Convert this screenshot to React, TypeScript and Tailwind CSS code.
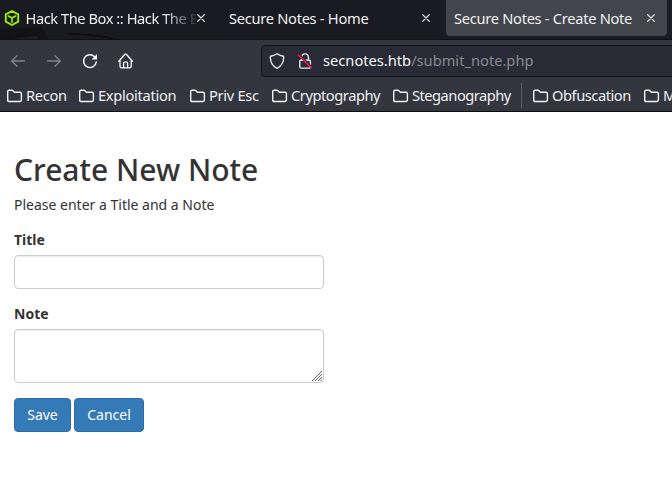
import React from "react";

const Folder = () => (
  <svg className="h-4 w-4 shrink-0" viewBox="0 0 16 16" fill="none" stroke="#f3f3f5" strokeWidth="1.4" strokeLinejoin="round">
    <path d="M.7 3.7Q.7 2.3 2.1 2.3H4.9Q5.5 2.3 5.9 2.7L7.4 4.2H13Q14.4 4.2 14.4 5.6V12.1Q14.4 13.5 13 13.5H2.1Q.7 13.5 .7 12.1Z" />
  </svg>
);

const Close = () => (
  <svg className="h-[10px] w-[10px] shrink-0" viewBox="0 0 10 10" stroke="#e6e6e9" strokeWidth="1.1" strokeLinecap="round">
    <path d="M1.5 1.5L8.5 8.5M8.5 1.5L1.5 8.5" />
  </svg>
);

const Bookmark = ({ label, className }: { label: string; className: string }) => (
  <div className={`flex h-6 shrink-0 items-center gap-[3px] whitespace-nowrap ${className}`}>
    <Folder />
    <span className="-mt-[2px]">{label}</span>
  </div>
);

function TabStrip() {
  return (
    <div className="relative flex h-10 items-start overflow-hidden border-b border-[#111114] bg-[#1a1b20] text-[14.67px] leading-5 tracking-[-0.29px] text-[#f0f0f2]">
      <svg className="absolute top-0 left-0 h-10 w-[140px]" viewBox="0 0 140 40" fill="none">
        <path d="M0 30Q22 28 42 27L49 40H0Z" fill="#131317" />
        <path d="M7 40L12 38L36 35L41 40Z" fill="#1c1c21" stroke="#0e0e11" />
        <path d="M66 33.5Q100 34 119 40Q95 35 66 33.5Z" fill="#101013" stroke="#101013" />
      </svg>
      <div className="relative flex h-9 w-[221px] shrink-0 items-center pl-[4px]">
        <svg className="h-4 w-4 shrink-0" viewBox="0 0 16 16" fill="none" stroke="#9fef00" strokeWidth="1.9" strokeLinejoin="round">
          <path d="M8 1L14.2 4.3V11.7L8 15L1.8 11.7V4.3Z" />
          <path d="M4 5.8L8 8.1L12 5.8M8 8.1V12.8" strokeWidth="1.7" />
        </svg>
        <span className="ml-[5.5px] w-[170.5px] overflow-hidden tracking-[-0.45px] whitespace-nowrap [mask-image:linear-gradient(to_right,black_136px,transparent_174px)]">Hack The Box :: Hack The Box</span>
        <Close />
      </div>
      <div className="relative flex h-9 w-[225px] shrink-0 items-center justify-between pr-[15px] pl-[8px]">
        <span>Secure Notes - Home</span>
        <Close />
      </div>
      <div className="relative -mt-1 flex h-10 w-[221px] shrink-0 items-center justify-between rounded-[4px] bg-[#42454c] pt-[4px] pr-[11px] pl-[8px]">
        <span>Secure Notes - Create Note</span>
        <Close />
      </div>
    </div>
  );
}

function Toolbar() {
  return (
    <div className="flex h-10 items-center bg-[#34363f]">
      <div className="mt-[1px] flex w-[261px] shrink-0 items-center gap-5 pl-[10px]">
        <svg className="h-4 w-4" viewBox="0 0 16 16" fill="none" stroke="#818288" strokeWidth="1.3" strokeLinecap="round" strokeLinejoin="round">
          <path d="M14.5 8H1.7M7 2.7L1.7 8L7 13.3" />
        </svg>
        <svg className="h-4 w-4" viewBox="0 0 16 16" fill="none" stroke="#818288" strokeWidth="1.3" strokeLinecap="round" strokeLinejoin="round">
          <path d="M1.5 8H14.3M9 2.7L14.3 8L9 13.3" />
        </svg>
        <svg className="h-4 w-4" viewBox="0 0 16 16" fill="none" stroke="#f7f7f9" strokeWidth="1.5" strokeLinecap="round">
          <path d="M14.3 9A6.4 6.4 0 1 1 12.4 3.5" />
          <path d="M15 1V6.4H9.6Z" fill="#f7f7f9" stroke="none" />
        </svg>
        <svg className="h-4 w-4" viewBox="0 0 16 16" fill="none" stroke="#f7f7f9" strokeWidth="1.3" strokeLinecap="round" strokeLinejoin="round">
          <path d="M.8 8.2L6.9 1.2Q7.6 .6 8.3 1.2L14.4 8.2M2 7V13.2Q2 14.8 3.6 14.8H11.6Q13.2 14.8 13.2 13.2V7M5.6 14.5V10.2Q5.6 8.8 7.6 8.8T9.6 10.2V14.5" />
        </svg>
      </div>
      <div className="mt-[1px] flex h-8 w-[430px] shrink-0 items-center rounded-[4px] border border-[#101116] bg-[#282a36] pl-[7px]">
        <svg className="h-4 w-4 shrink-0" viewBox="0 0 16 16" fill="none" stroke="#e5e5ea" strokeWidth="1.4" strokeLinejoin="round">
          <path d="M8 .7Q10.8 2.8 14.6 3.3Q15.2 11.8 8 15.3Q.8 11.8 1.4 3.3Q5.2 2.8 8 .7Z" />
        </svg>
        <svg className="ml-[12px] h-4 w-4 shrink-0" viewBox="0 0 16 16" fill="none" stroke="#e5e5ea" strokeWidth="1.4">
          <path d="M4.8 7V4.2A3.3 3.3 0 0 1 11.4 4.2V7M3.6 7.3H12.4Q13.4 7.3 13.4 8.3V14.1Q13.4 15.1 12.4 15.1H3.8Q2.8 15.1 2.8 14.1V8.3Q2.8 7.3 3.6 7.3Z" />
          <path d="M2.2 1.2L15.4 14.2" stroke="#282a36" strokeWidth="1.2" />
          <path d="M1 1.8L14.8 15.3" stroke="#f0194c" strokeWidth="1.6" />
        </svg>
        <span className="-mt-[2px] ml-[10px] text-[14.67px] whitespace-nowrap text-[#f8f8fa]">
          secnotes.htb<span className="text-[#888991]">/submit_note.php</span>
        </span>
      </div>
    </div>
  );
}

function Bookmarks() {
  return (
    <div className="flex h-8 items-center overflow-hidden border-b border-[#0c0c0d] bg-[#34363f] pl-[7px] text-[14.67px] tracking-[-0.4px] text-[#f0f0f2]">
      <Bookmark label="Recon" className="w-[72px] tracking-[-0.3px]" />
      <Bookmark label="Exploitation" className="w-[111px] tracking-[-0.3px]" />
      <Bookmark label="Priv Esc" className="w-[82px] tracking-[-0.3px]" />
      <Bookmark label="Cryptography" className="w-[121px] tracking-[-0.45px]" />
      <Bookmark label="Steganography" className="w-[128px] tracking-[-0.5px]" />
      <div className="h-[25px] w-px shrink-0 bg-[#5c5d65]" />
      <Bookmark label="Obfuscation" className="ml-[11px] w-[111px] tracking-[-0.45px]" />
      <Bookmark label="M" className="w-[36px]" />
    </div>
  );
}

export default function App() {
  return (
    <div className="h-[478px] w-[672px] overflow-hidden bg-white font-['Noto_Sans',sans-serif]">
      <TabStrip />
      <Toolbar />
      <Bookmarks />
      <main className="w-[338px] px-[14px] pt-[41px] text-[14px] leading-5 text-[#333]">
        <h2 className="text-[30px] leading-[33px] font-medium whitespace-nowrap">Create New Note</h2>
        <p className="mt-[9px]">Please enter a Title and a Note</p>
        <label className="mt-[15px] block font-bold">Title</label>
        <input className="mt-[5px] block h-[34px] w-[310px] rounded-[4px] border border-[#ccc] shadow-[inset_0_1px_1px_rgba(0,0,0,0.075)]" />
        <label className="mt-[15px] block font-bold">Note</label>
        <div className="mt-[5px] flex h-[54px] w-[310px] items-end justify-end rounded-[4px] border border-[#ccc] pr-px pb-px shadow-[inset_0_1px_1px_rgba(0,0,0,0.075)]">
          <svg className="h-[10px] w-[10px]" viewBox="0 0 10 10" stroke="#666" strokeWidth="1">
            <path d="M0 10L10 0M3 10L10 3M6 10L10 6M8.5 10L10 8.5" />
          </svg>
        </div>
        <div className="mt-[15px] flex gap-[3px] text-white">
          <button className="h-[34px] w-[57px] rounded-[4px] border border-[#2e6da4] bg-[#337ab7]">Save</button>
          <button className="h-[34px] w-[70px] rounded-[4px] border border-[#2e6da4] bg-[#337ab7]">Cancel</button>
        </div>
      </main>
    </div>
  );
}
